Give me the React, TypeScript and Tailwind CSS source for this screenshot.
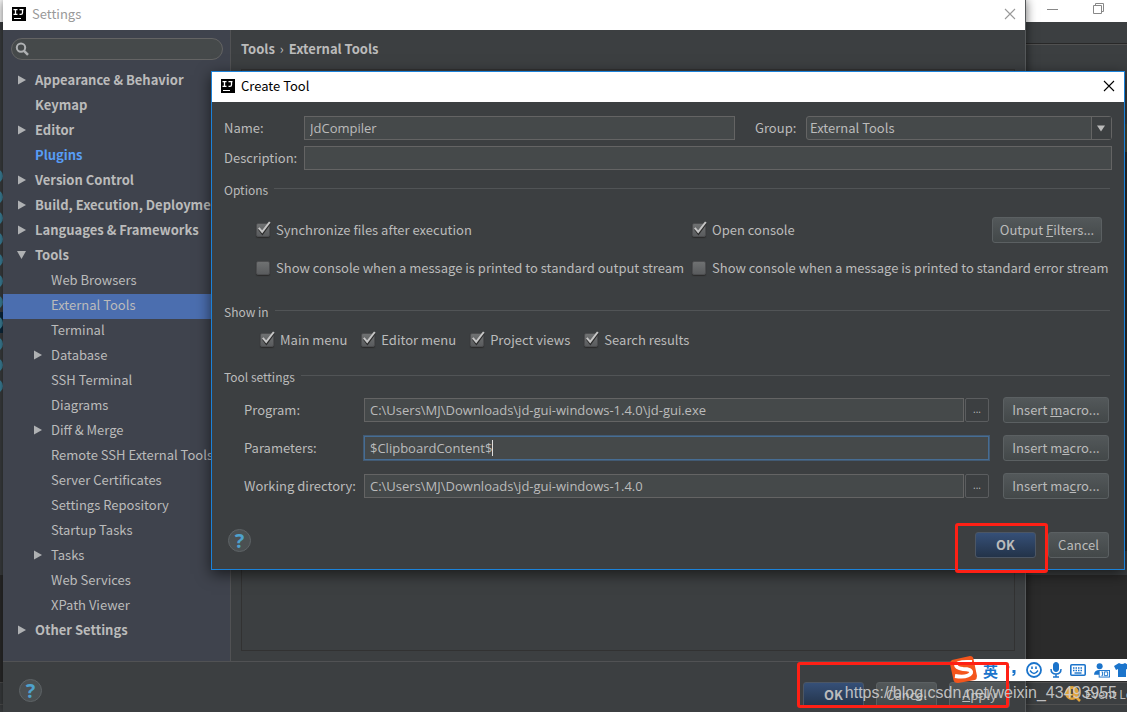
import React, { useState } from 'react';

interface TreeItem {
  label: string;
  level: 0 | 1;
  arrow?: 'right' | 'down';
  active?: boolean;
  highlight?: boolean;
}

const treeItems: TreeItem[] = [
  { label: 'Appearance & Behavior', level: 0, arrow: 'right' },
  { label: 'Keymap', level: 0 },
  { label: 'Editor', level: 0, arrow: 'right' },
  { label: 'Plugins', level: 0, highlight: true },
  { label: 'Version Control', level: 0, arrow: 'right' },
  { label: 'Build, Execution, Deployment', level: 0, arrow: 'right' },
  { label: 'Languages & Frameworks', level: 0, arrow: 'right' },
  { label: 'Tools', level: 0, arrow: 'down' },
  { label: 'Web Browsers', level: 1 },
  { label: 'External Tools', level: 1, active: true },
  { label: 'Terminal', level: 1 },
  { label: 'Database', level: 1, arrow: 'right' },
  { label: 'SSH Terminal', level: 1 },
  { label: 'Diagrams', level: 1 },
  { label: 'Diff & Merge', level: 1, arrow: 'right' },
  { label: 'Remote SSH External Tools', level: 1 },
  { label: 'Server Certificates', level: 1 },
  { label: 'Settings Repository', level: 1 },
  { label: 'Startup Tasks', level: 1 },
  { label: 'Tasks', level: 1, arrow: 'right' },
  { label: 'Web Services', level: 1 },
  { label: 'XPath Viewer', level: 1 },
  { label: 'Other Settings', level: 0, arrow: 'right' },
];

const IdeaLogo = () => (
  <svg viewBox="0 0 14 14" className="w-[14px] h-[14px] shrink-0">
    <rect width="14" height="14" fill="#000" />
    <path d="M1.500 2.700h4M3.500 2.700v5M1.500 7.300h4M7.500 2.700h4M10.500 2.700v3q0 1.700-1.500 1.700h-1.500" stroke="#fff" strokeWidth="1.300" fill="none" />
    <path d="M2 11.500h7" stroke="#fff" strokeWidth="1" />
  </svg>
);

const CloseIcon = () => (
  <svg viewBox="0 0 12 12" className="w-3 h-3" fill="none" stroke="currentColor" strokeWidth="1.1">
    <path d="M1 1l10 10M11 1L1 11" />
  </svg>
);

const TreeArrow: React.FC<{ dir?: 'right' | 'down' }> = ({ dir }) => (
  <svg viewBox="0 0 10 10" className="w-[10px] h-[10px] shrink-0" fill="#afb1b3">
    {dir === 'right' && <path d="M1 .5L9 5L1 9.5z" />}
    {dir === 'down' && <path d="M0 1L9 1L4.500 9z" />}
  </svg>
);

const HelpButton = () => (
  <button
    type="button"
    aria-label="Help"
    className="w-[23px] h-[23px] shrink-0 rounded-full border border-[#5e6366] bg-[#4b5052] text-[#4ea1cc] text-xl leading-none font-bold font-['Open_Sans',sans-serif] flex items-center justify-center"
  >
    ?
  </button>
);

interface ButtonProps {
  children: React.ReactNode;
  className?: string;
  primary?: boolean;
}

const Button: React.FC<ButtonProps> = ({ children, className = '', primary }) => (
  <button
    type="button"
    className={`h-[26px] rounded-[3px] border shrink-0 whitespace-nowrap bg-linear-to-b ${
      primary
        ? 'border-[#4c5664] from-[#365078] to-[#233349] font-bold'
        : 'border-[#5b6062] from-[#53585a] to-[#434849]'
    } ${className}`}
  >
    {children}
  </button>
);

interface CheckboxProps {
  label: string;
  defaultChecked?: boolean;
}

const Checkbox: React.FC<CheckboxProps> = ({ label, defaultChecked = false }) => {
  const [checked, setChecked] = useState(defaultChecked);

  return (
    <label className="flex items-center gap-1.5 whitespace-nowrap">
      <span className="relative w-[14px] h-[14px] shrink-0">
        <input
          type="checkbox"
          checked={checked}
          onChange={(e) => setChecked(e.target.checked)}
          className="block appearance-none w-[14px] h-[14px] rounded-xs bg-linear-to-b from-[#6f7172] to-[#5a5c5e] border border-[#4c4d4f] shadow-[0_1px_1px_#2b2b2b]"
        />
        {checked && (
          <svg viewBox="0 0 14 14" className="absolute left-0 -top-px w-[14px] h-[14px] overflow-visible pointer-events-none" fill="none">
            <path d="M3 7l3.4 4.6L13.6 1.6" stroke="#2b2b2b" strokeWidth="2.2" />
            <path d="M2.8 5.8L6.2 9.8L13.8 0" stroke="#c5c5c5" strokeWidth="2" />
          </svg>
        )}
      </span>
      {label}
    </label>
  );
};

const SectionTitle: React.FC<{ children: React.ReactNode }> = ({ children }) => (
  <div className="flex items-center gap-1.5 h-5 text-xs pr-0.5">
    <h3 className="shrink-0">{children}</h3>
    <span className="grow h-px bg-[#515456] mb-1" />
  </div>
);

interface SettingRowProps {
  id: string;
  label: string;
  value: string;
  browse?: boolean;
  focused?: boolean;
  macro: React.ReactNode;
}

const SettingRow: React.FC<SettingRowProps> = ({ id, label, value, browse, focused, macro }) => (
  <div className="flex items-center h-[26px]">
    <label htmlFor={id} className="w-[120px] shrink-0 whitespace-nowrap">{label}</label>
    <div className="relative grow flex font-['Open_Sans',sans-serif]">
      <input
        id={id}
        type="text"
        defaultValue={value}
        className={`grow min-w-0 h-6 px-[5px] pb-px bg-[#45494a] border outline-none ${
          focused ? 'border-[#466d94] ring-1 ring-[#466d94]/60' : 'border-[#646464]'
        }`}
      />
      {/* caret sits right after the value */}
      {focused && (
        <span className="absolute left-1.5 inset-y-0 flex items-center pointer-events-none" aria-hidden="true">
          <span className="invisible">{value}</span>
          <span className="w-px h-4 bg-[#dddddd]" />
        </span>
      )}
      {browse && (
        <button
          type="button"
          aria-label={`Browse ${label}`}
          className="w-6 h-6 ml-px shrink-0 rounded-[2px] border border-[#5b5d5f] text-[10px] leading-none pb-0.5"
        >
          ...
        </button>
      )}
    </div>
    <Button className="w-[106px] ml-[14px]">{macro}</Button>
  </div>
);

const Sidebar = () => (
  <nav className="w-[228px] shrink-0 bg-[#3f434d] border-r border-[#515254] pt-2">
    <div className="relative mx-2 mr-[7px] h-[22px]">
      <input
        type="text"
        aria-label="Search settings"
        className="block w-full h-[22px] pl-6 rounded-full bg-[#45494a] border border-[#646464] outline-none"
      />
      <svg viewBox="0 0 14 14" className="absolute left-1 top-1 w-[14px] h-[14px]" fill="none" stroke="#afb1b3">
        <circle cx="6" cy="5.6" r="4.2" strokeWidth="2" />
        <path d="M9 8.8l4 4" strokeWidth="2.4" />
      </svg>
    </div>
    <ul className="mt-[9px]">
      {treeItems.map((item) => (
        <li
          key={item.label}
          className={`h-[25px] pb-[3px] flex items-center gap-2 whitespace-nowrap overflow-hidden ${
            item.level === 0 ? 'pl-[14px] font-bold' : 'pl-[30px]'
          } ${item.active ? 'bg-[#4b6eaf]' : ''} ${item.highlight ? 'text-[#589df6]' : ''}`}
        >
          <TreeArrow dir={item.arrow} />
          {item.label}
        </li>
      ))}
    </ul>
  </nav>
);

const SettingsWindow = () => (
  <section className="absolute left-[3px] right-[101px] inset-y-0 flex flex-col bg-[#3c3f41] border-r border-[#55585a] shadow-[0_0_10px_rgba(0,0,0,0.6)]">
    <header className="h-[30px] shrink-0 bg-white flex items-center gap-1.5 pl-[9px] pr-[9px] pb-0.5 text-[#999999]">
      <IdeaLogo />
      <h1 className="grow">Settings</h1>
      <button type="button" aria-label="Close settings"><CloseIcon /></button>
    </header>
    <div className="grow flex min-h-0">
      <Sidebar />
      <main className="grow flex flex-col px-[10px] pb-[10px]">
        <h2 className="h-[39px] pb-px flex items-center gap-[5px] font-bold">
          <span>Tools</span>
          <span className="font-normal">›</span>
          <span>External Tools</span>
        </h2>
        <div className="grow border border-[#323232]" />
      </main>
    </div>
    <footer className="h-[51px] shrink-0 border-t border-[#515254] flex items-start pl-4 pt-[17px] pr-[15px]">
      <HelpButton />
      <div className="grow flex justify-end gap-3 mt-[3px]">
        <Button primary className="w-[61px]">OK</Button>
        <Button className="w-[61px]">Cancel</Button>
        <Button className="w-[61px]"><u>A</u>pply</Button>
      </div>
    </footer>
  </section>
);

const CreateToolDialog = () => (
  <section className="absolute left-[211px] right-[2px] top-[71px] bg-[#3c3f41] border border-[#1b82d9] shadow-[0_4px_14px_rgba(0,0,0,0.6)]">
    <header className="h-[30px] bg-white flex items-center gap-1.5 pl-[9px] pr-[9px] pb-0.5 text-black">
      <IdeaLogo />
      <h2 className="grow">Create Tool</h2>
      <button type="button" aria-label="Close dialog"><CloseIcon /></button>
    </header>
    <form className="pl-3 pr-3 pt-[14px] pb-[11px]">
      <div className="flex items-center">
        <label htmlFor="name" className="w-20 shrink-0">Name:</label>
        <input id="name" type="text" defaultValue="JdCompiler" className="grow min-w-0 h-6 px-[5px] pb-px bg-[#45494a] border border-[#646464] outline-none font-['Open_Sans',sans-serif]" />
        <label htmlFor="group" className="ml-5 w-[51px] shrink-0">Group:</label>
        <div className="relative w-[306px] shrink-0">
          <select id="group" className="block appearance-none w-full h-6 px-[3px] rounded-[3px] bg-[#45494a] border border-[#646464] outline-none">
            <option>External Tools</option>
          </select>
          <span className="absolute right-px top-px bottom-px w-5 border-l border-[#646464] bg-[#3c3f41] flex items-center justify-center pr-px pointer-events-none">
            <svg viewBox="0 0 8 7" className="w-2 h-[7px]" fill="#bbbbbb"><path d="M0 .5h8L4 6.500z" /></svg>
          </span>
        </div>
      </div>
      <div className="flex items-center mt-1.5">
        <label htmlFor="description" className="w-20 shrink-0">Description:</label>
        <input id="description" type="text" className="grow min-w-0 h-6 px-[5px] bg-[#45494a] border border-[#646464] outline-none" />
      </div>

      <div className="mt-[10px]"><SectionTitle>Options</SectionTitle></div>
      <div className="grid grid-cols-[436px_1fr] pl-8 mt-[17px]">
        <div className="flex items-center h-[26px]"><Checkbox label="Synchronize files after execution" defaultChecked /></div>
        <div className="flex items-center justify-between h-[26px] pr-[10px]">
          <Checkbox label="Open console" defaultChecked />
          <Button className="w-[110px]">Output <u>F</u>ilters...</Button>
        </div>
        <div className="flex items-center h-[26px] mt-3"><Checkbox label="Show console when a message is printed to standard output stream" /></div>
        <div className="flex items-center h-[26px] mt-3"><Checkbox label="Show console when a message is printed to standard error stream" /></div>
      </div>

      <div className="mt-[21px]"><SectionTitle>Show in</SectionTitle></div>
      <div className="flex gap-[14px] pl-9 mt-2 h-5">
        <Checkbox label="Main menu" defaultChecked />
        <Checkbox label="Editor menu" defaultChecked />
        <Checkbox label="Project views" defaultChecked />
        <Checkbox label="Search results" defaultChecked />
      </div>

      <div className="mt-[17px]"><SectionTitle>Tool settings</SectionTitle></div>
      <div className="flex flex-col gap-3 pl-5 pr-[3px] mt-[10px]">
        <SettingRow id="program" label="Program:" value="C:\Users\MJ\Downloads\jd-gui-windows-1.4.0\jd-gui.exe" browse macro={<>Insert <u>m</u>acro...</>} />
        <SettingRow id="parameters" label="Parameters:" value="$ClipboardContent$" focused macro={<>Insert m<u>a</u>cro...</>} />
        <SettingRow id="workdir" label="Working directory:" value="C:\Users\MJ\Downloads\jd-gui-windows-1.4.0" browse macro={<>Insert ma<u>c</u>ro...</>} />
      </div>

      <div className="flex items-start mt-[30px] pl-1 pr-[3px]">
        <HelpButton />
        <div className="grow flex justify-end gap-3 mt-[3px]">
          <Button primary className="w-[61px]">OK</Button>
          <Button className="w-[61px]">Cancel</Button>
        </div>
      </div>
    </form>
  </section>
);

// Editor window that shows around the edges of the settings window
const IdeBackground = () => (
  <div className="absolute inset-0 flex flex-col">
    <div className="h-[22px] bg-white flex justify-end items-start gap-[35px] pr-[23px] pt-[3px] text-[#888888]">
      <svg viewBox="0 0 11 11" className="w-[11px] h-[11px]" stroke="currentColor"><path d="M0 6.5h11" /></svg>
      <svg viewBox="0 0 11 11" className="w-[11px] h-[11px]" fill="none" stroke="currentColor"><path d="M.5 2.5h8v8h-8zM2.5 2.5v-2h8v8h-2" /></svg>
    </div>
    <div className="h-[22px] bg-[#3c3f41] border-b border-[#282828]" />
    <div className="h-[80px] bg-[#3c3f41] border-t border-[#515151]" />
    <div className="h-[28px] bg-[#4b4a36]" />
    <div className="h-[399px] bg-[#2b2b2b]" />
    <div className="h-[24px] bg-[#3c3f41]" />
    <div className="grow bg-[#2b2b2b]" />
    <div className="h-[22px] bg-[#3c3f41] border-t border-[#515151] flex justify-end items-center gap-1 overflow-hidden whitespace-nowrap">
      <svg viewBox="0 0 16 16" className="w-4 h-4 shrink-0">
        <circle cx="7" cy="7" r="7" fill="#e0a33c" />
        <path d="M11 11l4 4" stroke="#e0a33c" strokeWidth="2.5" />
        <path d="M7 3v5M7 9.500v2" stroke="#3c3f41" strokeWidth="1.6" />
      </svg>
      <span className="w-[42px] text-xs">Event Log</span>
    </div>
    <div className="h-2 bg-[#3c3f41] border-t border-[#515151]" />
  </div>
);

const projectFiles = ['a', 'b', 'c', 'd', 'e', 'f', 'g', 'h', 'i', 'j', 'k'];

// Project tree of the editor, only its right edge is visible
const ProjectStrip = () => (
  <div className="absolute left-0 top-[22px] w-[3px] h-[553px] bg-[#3c3f41] overflow-hidden pt-[143px]">
    {projectFiles.map((file) => (
      <div key={file} className={`h-[21px] flex items-center justify-end ${file === 'h' ? 'bg-[#0d293e]' : ''}`}>
        <span className="w-[14px] h-[14px] shrink-0 rounded-full bg-[#3e86a0]" />
      </div>
    ))}
  </div>
);

const InputMethodBar = () => (
  <div className="absolute right-0 top-[656px] w-[178px] h-[27px]">
    <div className="absolute left-3 right-0 top-[3px] h-[22px] bg-white flex items-center pl-[22px] gap-2 text-[#1b74cb] overflow-hidden">
      <span className="text-[15px] leading-none font-bold">英</span>
      <svg viewBox="0 0 12 16" className="w-3 h-4 shrink-0" fill="currentColor">
        <circle cx="2" cy="5" r="1.500" />
        <path d="M6.500 8h3v3q0 2.500-3 3v-1.500q1.500-.5 1.500-1.500H6.500z" />
      </svg>
      <svg viewBox="0 0 16 16" className="w-4 h-4 shrink-0" fill="none" stroke="currentColor">
        <circle cx="8" cy="8" r="7" strokeWidth="1.800" />
        <path d="M4 8.500q4 6 8 0" strokeWidth="1.400" />
        <path d="M6 4.500v2.500M10 4.500v2.500" strokeWidth="1.600" />
      </svg>
      <svg viewBox="0 0 12 16" className="w-3 h-4 shrink-0" fill="none" stroke="currentColor">
        <rect x="3.500" y="0.500" width="5" height="9" rx="2.500" fill="currentColor" />
        <path d="M1 7q0 5 5 5t5-5M6 12v3M3 15h6" strokeWidth="1.500" />
      </svg>
      <svg viewBox="0 0 16 12" className="w-4 h-3 shrink-0" fill="none" stroke="currentColor">
        <rect x=".8" y=".8" width="14.400" height="10.400" rx="1" strokeWidth="1.600" />
        <path d="M3 4h10M3 6.500h10" strokeWidth="1.500" strokeDasharray="1.500 1" />
        <path d="M4.500 9h7" strokeWidth="1.400" />
      </svg>
      <svg viewBox="0 0 17 16" className="w-4 h-4 shrink-0" fill="currentColor">
        <circle cx="6" cy="4" r="3.200" />
        <path d="M0 13q0-5 6-5t6 4v1z" />
        <rect x="5.500" y="8.500" width="11" height="7" fill="#fff" stroke="currentColor" />
        <path d="M8 10h1v4H8M11 10h3.500v4H11z" fill="none" stroke="currentColor" />
      </svg>
      <svg viewBox="0 0 16 16" className="-ml-1 w-4 h-4 shrink-0" fill="currentColor">
        <path d="M5 1q3 2 6 0l5 3-2 4-2-1v8H4V7L2 8 0 4z" />
      </svg>
    </div>
    <svg viewBox="0 0 28 27" className="absolute left-0 top-0 w-7 h-[27px]">
      <path d="M3 4L21 0Q24 0 24.500 3L28 20Q28 23 26 24L9 27Q5 27 4.500 24L1 8Q1 5 3 4z" fill="#f4551c" />
      <path d="M23 6Q8 5 7 9Q7 12 14 13Q23 13 22 17Q19 22 6 20" fill="none" stroke="#fff" strokeWidth="3.800" />
    </svg>
  </div>
);

const App = () => (
  <div className="relative h-screen overflow-hidden bg-[#2b2b2b] text-[#bbbbbb] text-[13px] leading-[18px] font-['Noto_Sans_CJK_SC',sans-serif]">
    <IdeBackground />
    <ProjectStrip />
    <SettingsWindow />
    <CreateToolDialog />
    <InputMethodBar />
    <div className="absolute left-[955px] top-[523px] w-[93px] h-[50px] border-3 border-[#ff2015] rounded-[3px] pointer-events-none" />
    <div className="absolute left-[797px] top-[662px] w-[212px] h-[46px] border-3 border-[#ff2015] rounded-[3px] pointer-events-none" />
    <p className="absolute right-[10px] bottom-[9px] text-base leading-5 text-[#d0d0d0]/90 font-['Liberation_Sans',sans-serif] whitespace-nowrap pointer-events-none">
      https://blog.csdn.net/weixin_43493955
    </p>
  </div>
);

export default App;
